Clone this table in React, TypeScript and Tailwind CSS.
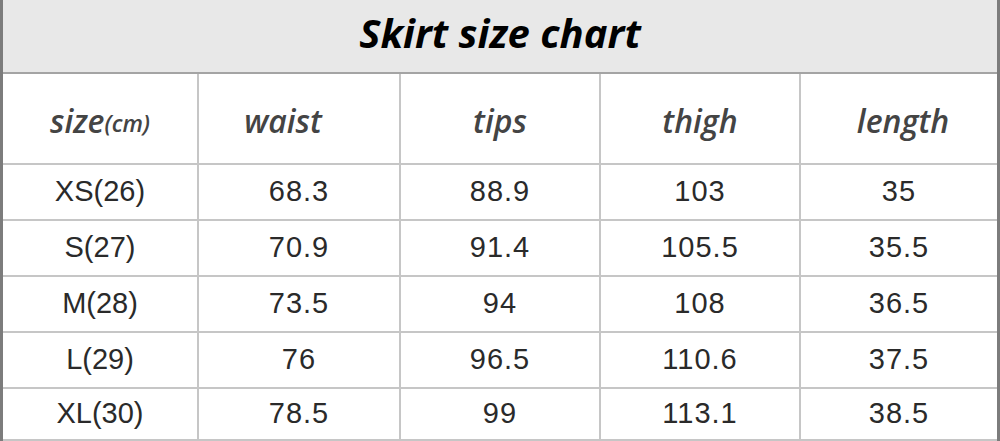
import React from 'react';

const headers = [
  { label: 'waist', cls: 'pr-[32px]' },
  { label: 'tips', cls: '' },
  { label: 'thigh', cls: '' },
  { label: 'length', cls: 'pl-[8px]' },
];

const rows: string[][] = [
  ['XS(26)', '68.3', '88.9', '103', '35'],
  ['S(27)', '70.9', '91.4', '105.5', '35.5'],
  ['M(28)', '73.5', '94', '108', '36.5'],
  ['L(29)', '76', '96.5', '110.6', '37.5'],
  ['XL(30)', '78.5', '99', '113.1', '38.5'],
];

const cols = 'grid grid-cols-[196px_202px_200px_200px_196px]';

export default function App() {
  return (
    <div className="w-[1000px] h-[441px] bg-white border-x-[3px] border-[#7c7c7c] flex flex-col overflow-hidden">
      <div className="h-[74px] shrink-0 bg-[#e8e8e8] border-b-2 border-[#a4a4a4] flex items-center justify-center">
        <h1 className="text-[40px] font-bold italic text-black font-['Open_Sans',sans-serif] leading-none -mt-[7px]">
          Skirt size chart
        </h1>
      </div>

      <div className={`${cols} h-[91px] shrink-0 border-b-2 border-[#c6c6c6]`}>
        <div className="border-r-2 border-[#c6c6c6] flex items-center justify-center pt-[4px] font-['Open_Sans',sans-serif] italic font-semibold text-[#444]">
          <span className="text-[32px]">size</span>
          <span className="text-[23px] mt-[6px]">(cm)</span>
        </div>
        {headers.map((h, i) => (
          <div
            key={h.label}
            className={`${i < 3 ? 'border-r-2 border-[#c6c6c6]' : ''} ${h.cls} flex items-center justify-center pt-[4px] text-[32px] font-['Open_Sans',sans-serif] italic font-semibold text-[#444]`}
          >
            {h.label}
          </div>
        ))}
      </div>

      {rows.map((r, ri) => (
        <div
          key={r[0]}
          className={`${cols} ${ri === rows.length - 1 ? 'h-[52px]' : 'h-[56px]'} shrink-0 border-b-2 border-[#c6c6c6]`}
        >
          {r.map((v, i) => (
            <div
              key={i}
              className={`${i < 4 ? 'border-r-2 border-[#c6c6c6]' : ''} flex items-center justify-center text-[29px] font-['Liberation_Sans',Arial,sans-serif] text-[#2a2a2a] ${i > 0 ? 'tracking-[1px]' : ''}`}
            >
              {v}
            </div>
          ))}
        </div>
      ))}
    </div>
  );
}
